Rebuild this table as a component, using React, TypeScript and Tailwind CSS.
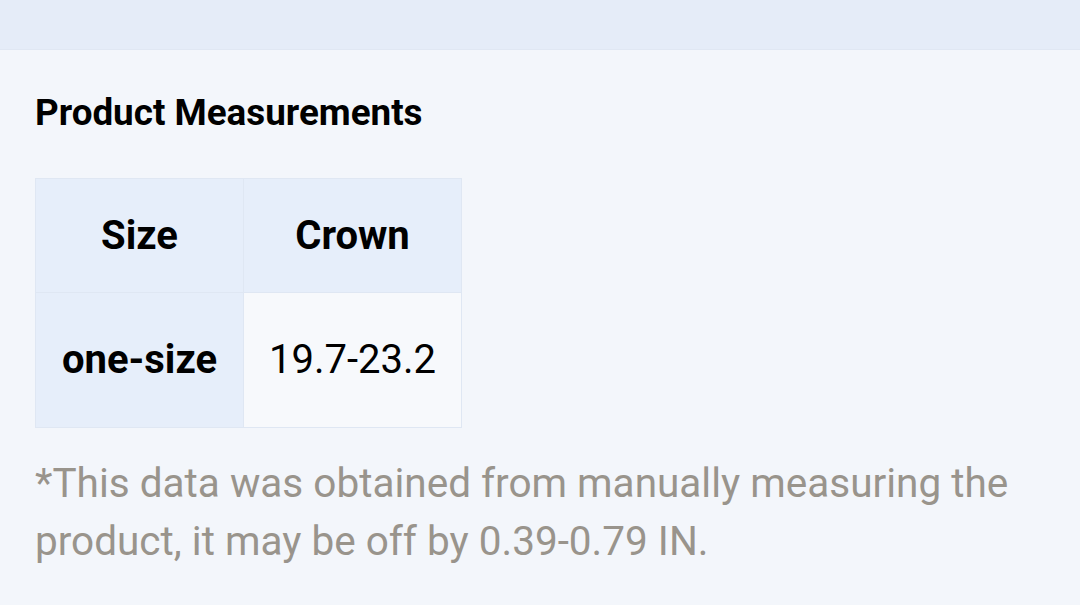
import React from 'react';

const rows = [{ size: 'one-size', crown: '19.7-23.2' }];

export default function App() {
  return <div className="w-[1080px] h-[605px] overflow-hidden bg-[#f3f6fb] font-['Roboto',sans-serif]">
      <div className="h-[50px] bg-[#e5ecf8] border-b border-[#e0e7f3]"></div>
      <div className="px-[35px] pt-[41px]">
        <h2 className="text-[36.8px] leading-[44px] font-bold text-black">Product Measurements</h2>
        <table className="mt-[43px] border-collapse text-[40px] text-black">
          <thead>
            <tr className="bg-[#e6eefa]">
              <th className="w-[208px] h-[114px] p-0 font-bold border border-[#dfe7f3]">Size</th>
              <th className="w-[218px] h-[114px] p-0 font-bold border border-[#dfe7f3]">Crown</th>
            </tr>
          </thead>
          <tbody>
            {rows.map(r => <tr key={r.size}>
                <td className="h-[135px] p-0 bg-[#e6eefa] font-bold text-center border border-[#dfe7f3]">{r.size}</td>
                <td className="h-[135px] p-0 bg-[#f7f9fc] text-center border border-[#dfe7f3]">{r.crown}</td>
              </tr>)}
          </tbody>
        </table>
        <p className="mt-[26px] text-[40.5px] leading-[58px] text-[#99948c]">
          *This data was obtained from manually measuring the product, it may be off by 0.39-0.79 IN.
        </p>
      </div>
    </div>;
}
